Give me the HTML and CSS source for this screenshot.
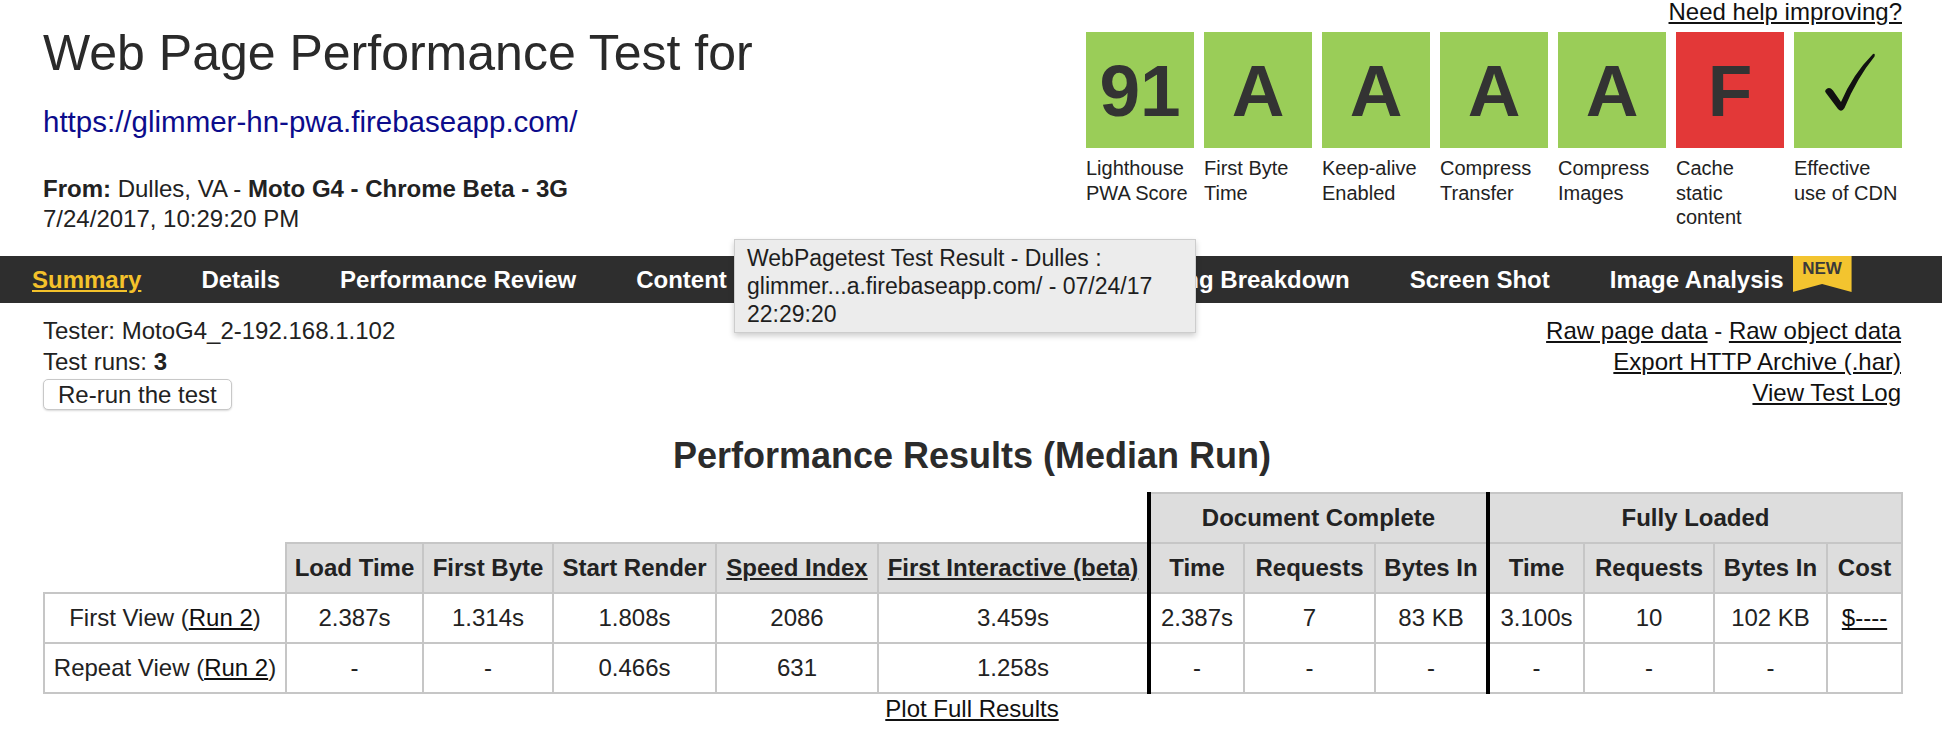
FILE: index.html
```html
<!DOCTYPE html>
<html lang="en">
<head>
<meta charset="utf-8">
<title>WebPagetest Test Result</title>
<link rel="stylesheet" href="styles.css">
</head>
<body>
<header class="top">
  <div class="test-info">
    <h1 class="title">Web Page Performance Test for</h1>
    <a class="test-url" href="#">https://glimmer-hn-pwa.firebaseapp.com/</a>
    <p class="from"><b>From:</b> Dulles, VA - <b>Moto G4 - Chrome Beta - 3G</b></p>
    <p class="date">7/24/2017, 10:29:20 PM</p>
  </div>
  <div class="grades">
    <a class="help" href="#">Need help improving?</a>
    <ul class="grade-list">
      <li class="grade"><div class="grade-box pass">91</div><span class="grade-label">Lighthouse PWA Score</span></li>
      <li class="grade"><div class="grade-box pass">A</div><span class="grade-label">First Byte Time</span></li>
      <li class="grade"><div class="grade-box pass">A</div><span class="grade-label">Keep-alive Enabled</span></li>
      <li class="grade"><div class="grade-box pass">A</div><span class="grade-label">Compress Transfer</span></li>
      <li class="grade"><div class="grade-box pass">A</div><span class="grade-label">Compress Images</span></li>
      <li class="grade"><div class="grade-box fail">F</div><span class="grade-label">Cache static content</span></li>
      <li class="grade"><div class="grade-box pass"><svg class="check" viewBox="0 0 108 116" width="108" height="116"><path d="M31.5 58 Q35 54 39 58.5 L47 70 Q59 42 79 22 Q81.5 21 80.5 24.5 Q63 46 50.5 76 Q47.5 81 44 77 L32 61 Q30.5 59.5 31.5 58 Z" fill="#111"/></svg></div><span class="grade-label">Effective use of CDN</span></li>
    </ul>
  </div>
</header>

<nav class="tabs">
  <a class="tab current" href="#">Summary</a>
  <a class="tab" href="#">Details</a>
  <a class="tab" href="#">Performance Review</a>
  <a class="tab" href="#">Content Breakdown</a>
  <a class="tab" href="#">Domains</a>
  <a class="tab" href="#">Processing Breakdown</a>
  <a class="tab" href="#">Screen Shot</a>
  <a class="tab" href="#">Image Analysis<span class="badge">NEW</span></a>
</nav>

<div class="tooltip">WebPagetest Test Result - Dulles :<br>glimmer...a.firebaseapp.com/ - 07/24/17<br>22:29:20</div>

<section class="run-info">
  <div class="tester">
    <div class="line">Tester: MotoG4_2-192.168.1.102</div>
    <div class="line">Test runs: <b>3</b></div>
    <button class="rerun" type="button">Re-run the test</button>
  </div>
  <div class="raw-links">
    <div class="line"><a href="#">Raw page data</a> - <a href="#">Raw object data</a></div>
    <div class="line"><a href="#">Export HTTP Archive (.har)</a></div>
    <div class="line"><a href="#">View Test Log</a></div>
  </div>
</section>

<section class="results-section">
  <h2 class="results-title">Performance Results (Median Run)</h2>
  <table class="results">
    <colgroup>
      <col class="c-label"><col class="c-load"><col class="c-fb"><col class="c-sr"><col class="c-si"><col class="c-fi">
      <col class="c-dt"><col class="c-dr"><col class="c-db">
      <col class="c-ft"><col class="c-fr"><col class="c-fbi"><col class="c-cost">
    </colgroup>
    <tr>
      <th class="blank" colspan="6"></th>
      <th class="sep" colspan="3">Document Complete</th>
      <th class="sep" colspan="4">Fully Loaded</th>
    </tr>
    <tr>
      <th class="blank"></th>
      <th>Load Time</th>
      <th>First Byte</th>
      <th>Start Render</th>
      <th><a href="#">Speed Index</a></th>
      <th><a href="#">First Interactive (beta)</a></th>
      <th class="sep">Time</th>
      <th>Requests</th>
      <th>Bytes In</th>
      <th class="sep">Time</th>
      <th>Requests</th>
      <th>Bytes In</th>
      <th>Cost</th>
    </tr>
    <tr>
      <td>First View (<a href="#">Run 2</a>)</td>
      <td>2.387s</td>
      <td>1.314s</td>
      <td>1.808s</td>
      <td>2086</td>
      <td>3.459s</td>
      <td class="sep">2.387s</td>
      <td>7</td>
      <td>83 KB</td>
      <td class="sep">3.100s</td>
      <td>10</td>
      <td>102 KB</td>
      <td><a href="#">$----</a></td>
    </tr>
    <tr>
      <td>Repeat View (<a href="#">Run 2</a>)</td>
      <td>-</td>
      <td>-</td>
      <td>0.466s</td>
      <td>631</td>
      <td>1.258s</td>
      <td class="sep">-</td>
      <td>-</td>
      <td>-</td>
      <td class="sep">-</td>
      <td>-</td>
      <td>-</td>
      <td></td>
    </tr>
  </table>
  <p class="plot"><a href="#">Plot Full Results</a></p>
</section>
</body>
</html>
```

FILE: styles.css
```css
* { box-sizing: border-box; }

body {
  margin: 0;
  position: relative;
  font-family: "Liberation Sans", Arial, Helvetica, sans-serif;
  color: #222;
  background: #fff;
}

a { color: #111; }

/* ---------- header ---------- */
.top {
  display: flex;
  justify-content: space-between;
  align-items: flex-start;
  height: 256px;
  padding: 0 40px 0 43px;
}

.title {
  margin: 24px 0 0;
  font-size: 50px;
  line-height: 58px;
  font-weight: normal;
  color: #2a2a2a;
}

.test-url {
  display: block;
  margin-top: 22px;
  font-size: 29.5px;
  line-height: 35px;
  color: #0c0c8c;
  text-decoration: none;
}

.from,
.date {
  margin: 0;
  font-size: 24px;
  line-height: 30px;
}

.from { margin-top: 35px; }

.grades {
  width: 816px;
  display: flex;
  flex-direction: column;
  align-items: flex-end;
}

.help {
  font-size: 24px;
  line-height: 24px;
  color: #111;
}

.grade-list {
  list-style: none;
  margin: 8px 0 0;
  padding: 0;
  display: flex;
  gap: 10px;
}

.grade { width: 108px; }

.grade-box {
  height: 116px;
  display: flex;
  align-items: center;
  justify-content: center;
  font-size: 73px;
  font-weight: bold;
  color: #333;
}

.grade-box.pass { background: #9acd58; }
.grade-box.fail { background: #e33838; }

.check { display: block; }

.grade-label {
  display: block;
  margin-top: 8px;
  font-size: 20px;
  line-height: 24.5px;
  color: #222;
}

/* ---------- nav ---------- */
.tabs {
  display: flex;
  height: 47px;
  padding-left: 2px;
  background: #2e2e2e;
}

.tab {
  display: flex;
  padding: 0 30px;
  font-size: 24px;
  font-weight: bold;
  line-height: 47px;
  color: #fff;
  text-decoration: none;
  white-space: nowrap;
}

.tab.current {
  color: #f4c22b;
  text-decoration: underline;
}

.badge {
  align-self: flex-start;
  width: 59px;
  height: 36px;
  margin-left: 9px;
  padding-top: 3px;
  background: #f3c42f;
  color: #3a3a3a;
  font-size: 17px;
  line-height: 20px;
  text-align: center;
  clip-path: polygon(0 0, 100% 0, 100% 100%, 50% 78%, 0 100%);
}

/* ---------- tooltip ---------- */
.tooltip {
  position: absolute;
  left: 734px;
  top: 239px;
  width: 462px;
  height: 94px;
  padding: 4px 0 0 12px;
  background: #ececec;
  border: 1px solid #cdcdcd;
  box-shadow: 0 3px 6px rgba(0, 0, 0, 0.2);
  font-size: 23px;
  line-height: 28px;
  color: #1e1e1e;
  white-space: nowrap;
}

/* ---------- run info ---------- */
.run-info {
  display: flex;
  justify-content: space-between;
  padding: 12px 41px 0 43px;
  font-size: 24px;
}

.line { line-height: 31px; }

.raw-links { text-align: right; }

.rerun {
  display: block;
  height: 31px;
  margin-top: 2px;
  padding: 0 14px;
  font-family: inherit;
  font-size: 24px;
  line-height: 29px;
  color: #222;
  background: #fff;
  border: 1px solid #c8c8c8;
  border-radius: 5px;
  box-shadow: 0 1px 2px rgba(0, 0, 0, 0.15);
}

/* ---------- results ---------- */
.results-section {
  padding: 0 41px 0 43px;
}

.results-title {
  margin: 25px 0 15px;
  text-align: center;
  font-size: 36px;
  line-height: 42px;
  font-weight: bold;
  color: #2b2b2b;
}

.results {
  width: 1858px;
  border-collapse: collapse;
  table-layout: fixed;
  font-size: 24px;
  text-align: center;
}

.c-label { width: 242px; }
.c-load { width: 137px; }
.c-fb { width: 130px; }
.c-sr { width: 163px; }
.c-si { width: 162px; }
.c-fi { width: 271px; }
.c-dt { width: 95px; }
.c-dr { width: 131px; }
.c-db { width: 113px; }
.c-ft { width: 96px; }
.c-fr { width: 130px; }
.c-fbi { width: 113px; }
.c-cost { width: 75px; }

.results tr { height: 50px; }

.results th,
.results td {
  height: 50px;
  padding: 0 2px;
  border: 2px solid #c6c6c6;
  white-space: nowrap;
}

.results th {
  background: #dddddd;
  font-weight: bold;
}

.results th a { color: #222; }

.results th.blank {
  border: none;
  background: none;
}

.results .sep { border-left: 4px solid #000; }

.plot {
  margin: 1px 0 0;
  text-align: center;
  font-size: 24px;
  line-height: 28px;
}
```
